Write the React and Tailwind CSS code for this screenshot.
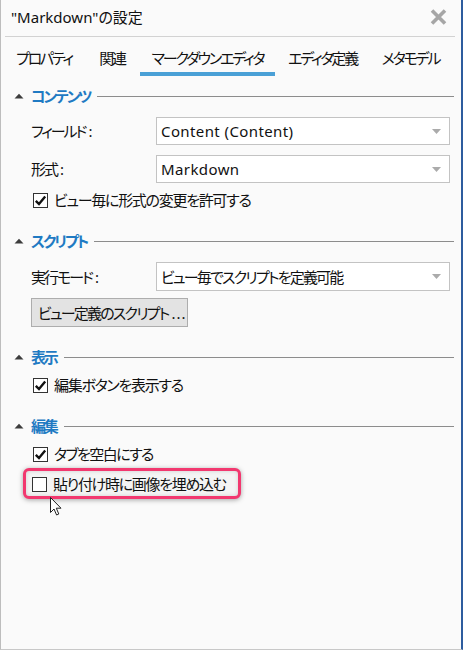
import React from "react";

function Tri() {
  return (
    <svg width="10" height="6" viewBox="0 0 10 6" className="shrink-0">
      <path d="M0.5 5.5 L5 0.8 L9.5 5.5 Z" fill="#3c3c3c" />
    </svg>
  );
}

function Section({ title }) {
  return (
    <div className="flex items-center h-[20px] pl-[13px] pr-[7px]">
      <Tri />
      <span className="ml-[7px] text-[15px] font-bold text-[#1f7ac3] leading-[20px] tracking-[-2.2px] whitespace-nowrap">{title}</span>
      <div className="flex-1 h-px bg-[#8c8c8c] ml-[7px] mt-[1px]" />
    </div>
  );
}

function Check({ checked }) {
  return (
    <div className="w-[15px] h-[15px] border border-[#333] bg-white flex items-center justify-center shrink-0">
      {checked && (
        <svg width="13" height="13" viewBox="0 0 13 13">
          <path d="M1.8 6.8 L5 10 L11.2 2.6" fill="none" stroke="#111" strokeWidth="2.4" />
        </svg>
      )}
    </div>
  );
}

function CheckRow({ checked, label, tr = "tracking-[-1.3px]" }) {
  return (
    <div className="flex items-center h-[20px] pl-[32px]">
      <Check checked={checked} />
      <span className={`ml-[6px] text-[15px] leading-[20px] whitespace-nowrap ${tr}`}>{label}</span>
    </div>
  );
}

function Select({ value, tr = "" }) {
  return (
    <div className="flex-1 h-full bg-white border border-[#c3c3c3] flex items-center pl-[4px] pr-[8px]">
      <span className={`flex-1 text-[15px] leading-[20px] whitespace-nowrap ${tr}`}>{value}</span>
      <svg width="9" height="5" viewBox="0 0 9 5">
        <path d="M0 0 L9 0 L4.5 5 Z" fill="#ababab" />
      </svg>
    </div>
  );
}

function FieldRow({ label, value, h = "h-[28px]", tr = "" }) {
  return (
    <div className={`flex items-center ${h} pl-[30px] pr-[11px]`}>
      <span className="w-[125px] text-[15px] leading-[20px] whitespace-nowrap">
        <span className="tracking-[-2px]">{label}</span>
        <span className="ml-[3px]">:</span>
      </span>
      <Select value={value} tr={tr} />
    </div>
  );
}

const tabs = [
  { t: "プロパティ", w: "w-[80px]" },
  { t: "関連", w: "w-[56px]" },
  { t: "マークダウンエディタ", w: "w-[135px]", active: true },
  { t: "エディタ定義", w: "w-[95px]" },
  { t: "メタモデル", w: "w-[81px]" },
];

export default function App() {
  return (
    <div className="relative w-[463px] h-[650px] bg-[#fafafa] border-l border-b border-l-[#bdbdbd] border-b-[#c8c8c8] border-r-2 border-r-[#2d5c9e] text-[#111] font-['Noto_Sans','Noto_Sans_CJK_JP',sans-serif] [font-feature-settings:'palt'] flex flex-col overflow-hidden">
      {/* Title bar */}
      <div className="h-[36px] flex items-center justify-between pl-[10px] pr-[14px] pb-[2px]">
        <span className="text-[15px] leading-[20px]">"Markdown"の設定</span>
        <svg width="17" height="16" viewBox="0 0 17 16">
          <path d="M2 1.5 L15 14.5 M15 1.5 L2 14.5" stroke="#a6a6a6" strokeWidth="3.6" strokeLinecap="butt" />
        </svg>
      </div>
      <div className="h-px bg-[#d2d2d2] ml-[4px] mr-[6px]" />

      {/* Tabs */}
      <div className="flex pl-[3px]">
        {tabs.map((tab) => (
          <div key={tab.t} className={`${tab.w} flex flex-col items-stretch`}>
            <div className="mt-[11px] h-[20px] text-center text-[15px] leading-[20px] whitespace-nowrap tracking-[-2.2px]">{tab.t}</div>
            <div className={`mt-[4px] h-[4px] ${tab.active ? "bg-[#4aa0d6]" : ""}`} />
          </div>
        ))}
      </div>

      {/* コンテンツ */}
      <div className="mt-[10px]">
        <Section title="コンテンツ" />
      </div>
      <div className="mt-[11px]">
        <FieldRow label="フィールド" value="Content (Content)" tr="tracking-[0.4px]" />
      </div>
      <div className="mt-[10px]">
        <FieldRow label="形式" value="Markdown" tr="tracking-[0.4px]" />
      </div>
      <div className="mt-[7px]">
        <CheckRow checked label="ビュー毎に形式の変更を許可する" />
      </div>

      {/* スクリプト */}
      <div className="mt-[21px]">
        <Section title="スクリプト" />
      </div>
      <div className="mt-[11px]">
        <FieldRow label="実行モード" value="ビュー毎でスクリプトを定義可能" h="h-[29px]" tr="tracking-[-1.8px]" />
      </div>
      <div className="mt-[7px] pl-[30px]">
        <div className="w-[157px] h-[29px] bg-[#e3e3e3] border border-[#adadad] flex items-center pl-[6px] text-[15px] leading-[20px] whitespace-nowrap">
          <span className="tracking-[-1.8px]">ビュー定義のスクリプト</span>
          <span className="ml-[3px] tracking-[1px]">...</span>
        </div>
      </div>

      {/* 表示 */}
      <div className="mt-[20px]">
        <Section title="表示" />
      </div>
      <div className="mt-[8px]">
        <CheckRow checked label="編集ボタンを表示する" />
      </div>

      {/* 編集 */}
      <div className="mt-[21px]">
        <Section title="編集" />
      </div>
      <div className="mt-[8px]">
        <CheckRow checked label="タブを空白にする" tr="tracking-[-1.6px]" />
      </div>
      <div className="mt-[4px] ml-[22px] w-[218px] h-[31px] rounded-[6px] border-[3px] border-[#f2386f] bg-[#f4f4f4] shadow-[0_1px_5px_rgba(0,0,0,0.35),inset_0_0_4px_rgba(0,0,0,0.15)] flex items-center pl-[6px] pt-[1px]">
        <Check checked={false} />
        <span className="ml-[6px] text-[15px] leading-[20px] whitespace-nowrap tracking-[-1.3px]">貼り付け時に画像を埋め込む</span>
      </div>

      {/* mouse cursor */}
      <svg className="absolute left-[49px] top-[497px]" width="13" height="20" viewBox="0 0 13 20">
        <path d="M0.5 0.5 L0.5 15.5 L4 12 L6.6 18 L8.8 17 L6.3 11.2 L11 11.2 Z" fill="#fff" stroke="#222" strokeWidth="1" strokeLinejoin="round" />
      </svg>
    </div>
  );
}
